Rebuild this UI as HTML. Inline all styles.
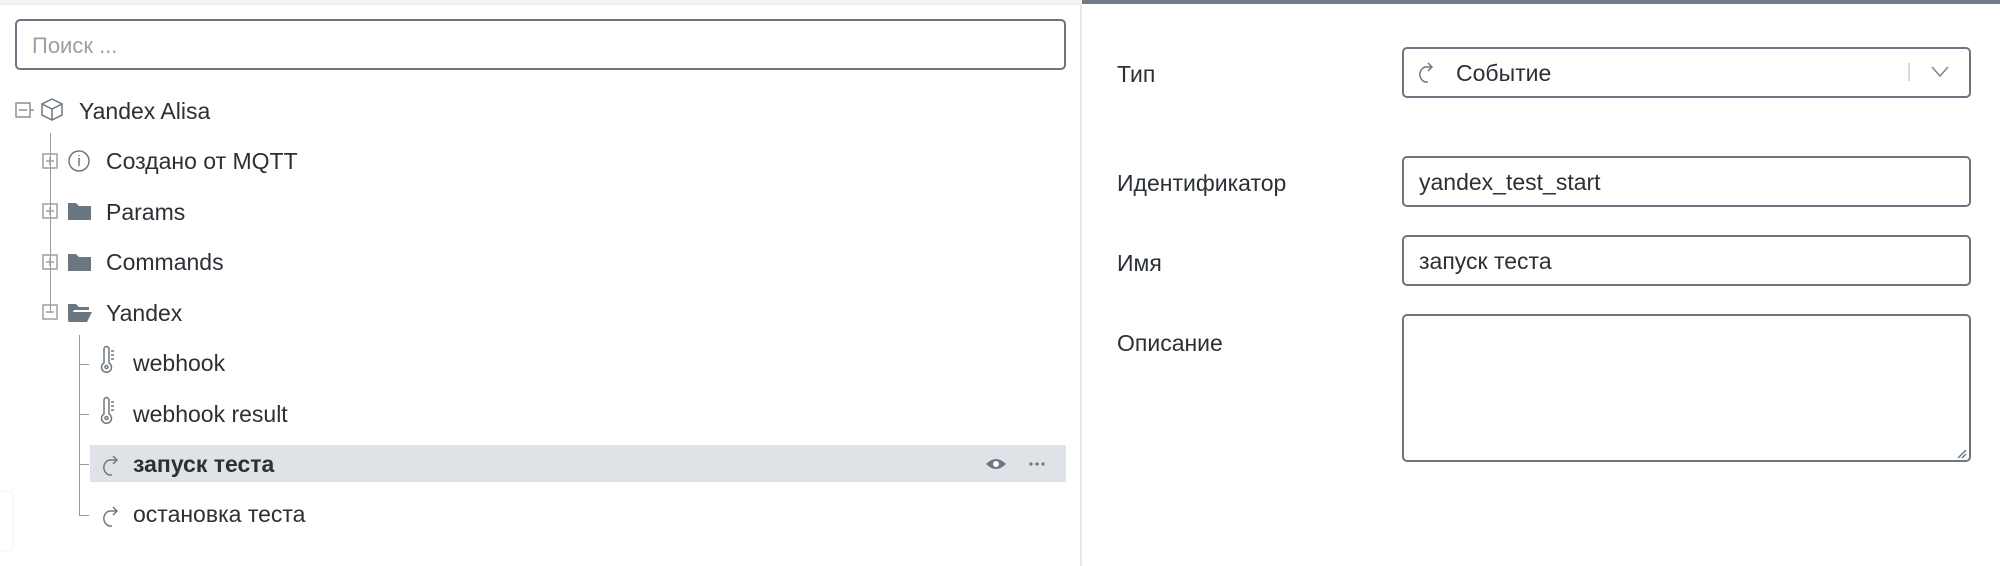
<!DOCTYPE html>
<html><head><meta charset="utf-8"><style>
*{box-sizing:border-box;margin:0;padding:0}
body{width:2000px;height:566px;background:#f3f4f5;font-family:"Liberation Sans",sans-serif;color:#2b3035;position:relative;overflow:hidden}
.left{position:absolute;left:0;top:5px;width:1080px;height:561px;background:#fff;box-shadow:2px 0 3px rgba(0,0,0,.08)}
.right{position:absolute;left:1082px;top:0;width:918px;height:566px;background:#fff;border-top:4px solid #6f7b86}
.search{position:absolute;left:15px;top:14px;width:1051px;height:51px;border:2px solid #6d7680;border-radius:5px;font-size:22px;color:#9aa0a6;padding:12px 0 0 15px}
.row{position:absolute;font-size:23px;height:30px;line-height:30px}
.hl{position:absolute;left:90px;top:440px;width:976px;height:37px;background:#dfe3e7}
.vl{position:absolute;width:1px;background:#999}
.hz{position:absolute;height:1px;background:#999}
.lab{position:absolute;left:1117px;font-size:23px}
.inp{position:absolute;left:1402px;width:569px;border:2px solid #6d7680;border-radius:5px;font-size:23px;padding-left:15px}
</style></head><body>
<div class="left">
<div class="search">Поиск ...</div>
<div class="hl"></div>
<div class="vl" style="left:50px;top:128px;height:180px"></div>
<div class="vl" style="left:79px;top:330px;height:180px"></div>
<div class="hz" style="left:79px;top:359px;width:10px"></div>
<div class="hz" style="left:79px;top:409px;width:10px"></div>
<div class="hz" style="left:79px;top:459px;width:10px"></div>
<div class="hz" style="left:79px;top:510px;width:10px"></div>
<svg width="1080" height="561" style="position:absolute;left:0;top:0" fill="none" stroke="#7a828a" stroke-width="1.5">
<rect x="16" y="98" width="14" height="14" stroke="#8a9096"/><path d="M19 105h8M30 105h4" stroke="#8a9096"/>
<path d="M52 94l10 5v11l-10 5-10-5V99zM42 99l10 5 10-5M52 104v11" stroke="#6f7880"/>
<g stroke="#9aa0a6"><rect x="43" y="149" width="14" height="14"/><path d="M46 156h8M50 152v8"/>
<rect x="43" y="199" width="14" height="14"/><path d="M46 206h8M50 202v8"/>
<rect x="43" y="250" width="14" height="14"/><path d="M46 257h8M50 253v8"/>
<rect x="43" y="300" width="14" height="14"/><path d="M46 307h8"/></g>
<circle cx="79" cy="156" r="10" stroke="#6f7880"/><path d="M79 153v8M79 150v1" stroke="#6f7880"/>
<path d="M68 198h8l3 3h12v14H68z" fill="#6c7680" stroke="none"/>
<path d="M68 249h8l3 3h12v14H68z" fill="#6c7680" stroke="none"/>
<path d="M68 299h8l3 3h10v3H74l-6 11zM72 307h20l-5 10H68z" fill="#6c7680" stroke="none"/>
<g stroke="#6f7880"><path d="M104 344v14a5 5 0 1 0 5 0v-14a2.5 2.5 0 0 0-5 0zM111 346h3M111 350h3M111 354h3"/><circle cx="106.5" cy="362" r="1.5"/>
<path d="M104 395v14a5 5 0 1 0 5 0v-14a2.5 2.5 0 0 0-5 0zM111 397h3M111 401h3M111 405h3"/><circle cx="106.5" cy="413" r="1.5"/></g>
<g stroke="#6f7880"><path d="M112 470h-3a8 8 0 0 1 0-15h7M113 451l4 4-4 4"/>
<path d="M112 521h-3a8 8 0 0 1 0-15h7M113 502l4 4-4 4"/></g>
<path d="M986 459q10-10 20 0q-10 10-20 0z" fill="#6c7680" stroke="none"/><circle cx="996" cy="459" r="3" fill="#fff" stroke="none"/>
<g fill="#6c7680" stroke="none"><circle cx="1031" cy="459" r="1.6"/><circle cx="1037" cy="459" r="1.6"/><circle cx="1043" cy="459" r="1.6"/></g>
</svg>
<div class="row" style="left:79px;top:91px">Yandex Alisa</div>
<div class="row" style="left:106px;top:141px">Создано от MQTT</div>
<div class="row" style="left:106px;top:192px">Params</div>
<div class="row" style="left:106px;top:242px">Commands</div>
<div class="row" style="left:106px;top:293px">Yandex</div>
<div class="row" style="left:133px;top:343px">webhook</div>
<div class="row" style="left:133px;top:394px">webhook result</div>
<div class="row" style="left:133px;top:444px;font-weight:bold">запуск теста</div>
<div class="row" style="left:133px;top:494px">остановка теста</div>
</div>
<div style="position:absolute;left:0;top:492px;width:12px;height:58px;background:#fff;border-radius:0 4px 4px 0;box-shadow:0 0 3px rgba(0,0,0,.1)"></div>
<div class="right"></div>
<div class="lab" style="top:61px">Тип</div>
<div class="lab" style="top:170px">Идентификатор</div>
<div class="lab" style="top:250px">Имя</div>
<div class="lab" style="top:330px">Описание</div>
<div class="inp" style="top:47px;height:51px;line-height:49px;padding-left:52px">Событие</div>
<svg width="2000" height="566" style="position:absolute;left:0;top:0" fill="none" stroke="#6f7880" stroke-width="1.5">
<path d="M1428 82h-3a8 8 0 0 1 0-15h6M1428 63l4 4-4 4"/>
<path d="M1909 63v18" stroke="#ccc"/>
<path d="M1932 67l8 9 8-9" stroke="#7a828a"/>
<path d="M1958 458l8-8M1962 458l4-4" stroke="#6f7880"/>
</svg>
<div class="inp" style="top:156px;height:51px;line-height:49px">yandex_test_start</div>
<div class="inp" style="top:235px;height:51px;line-height:49px">запуск теста</div>
<div class="inp" style="top:314px;height:148px;background:transparent"></div>
</body></html>
